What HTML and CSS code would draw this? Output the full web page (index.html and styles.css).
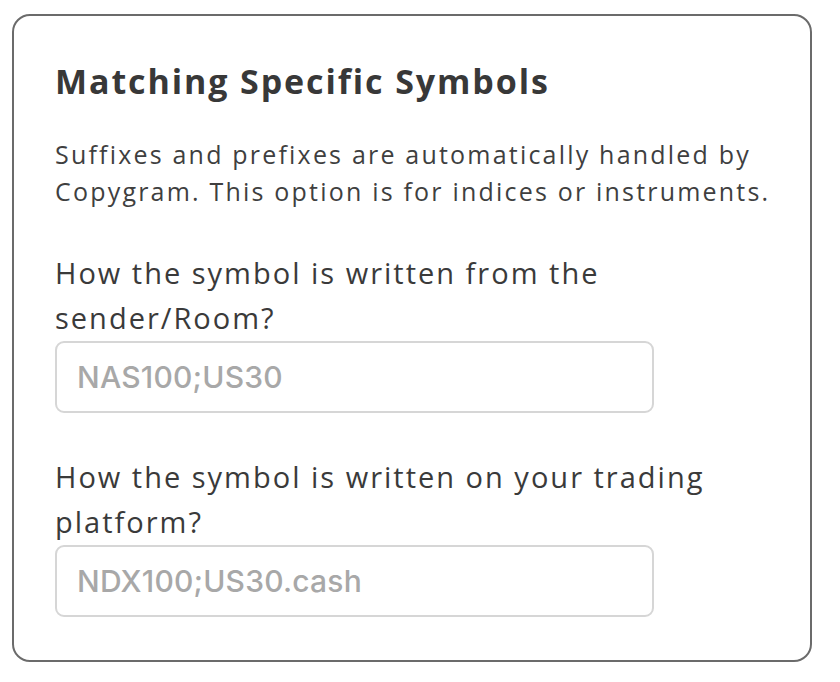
FILE: index.html
```html
<!DOCTYPE html>
<html lang="en">
<head>
<meta charset="utf-8">
<title>Matching Specific Symbols</title>
<link rel="stylesheet" href="styles.css">
</head>
<body>
<section class="card">
  <h2 class="title">Matching Specific Symbols</h2>
  <p class="desc">Suffixes and prefixes are automatically handled by Copygram. This option is for indices or instruments.</p>
  <div class="field">
    <label class="label" for="from">How the symbol is written from the sender/Room?</label>
    <input class="input" id="from" type="text" placeholder="NAS100;US30">
  </div>
  <div class="field">
    <label class="label" for="to">How the symbol is written on your trading platform?</label>
    <input class="input" id="to" type="text" placeholder="NDX100;US30.cash">
  </div>
</section>
</body>
</html>
```
FILE: styles.css
```css
html, body {
  margin: 0;
  padding: 0;
  background: #ffffff;
}
body {
  padding: 14px 0 0 12px;
  font-family: "Open Sans", "DejaVu Sans", sans-serif;
  color: #3a3a3a;
}
.card {
  box-sizing: border-box;
  width: 800px;
  height: 648px;
  border: 2px solid #6b6b6b;
  border-radius: 18px;
  padding: 37px 16px 0 41px;
  display: flex;
  flex-direction: column;
}
.title {
  margin: 0;
  font-size: 34px;
  line-height: 56px;
  font-weight: 700;
  letter-spacing: 1.9px;
  color: #383838;
}
.desc {
  margin: 27px 0 0 0;
  font-size: 25px;
  line-height: 37px;
  letter-spacing: 2.2px;
  color: #3f3f3f;
  max-width: 730px;
}
.field {
  display: flex;
  flex-direction: column;
  margin-top: 40px;
}
.field + .field {
  margin-top: 41px;
}
.label {
  font-size: 29px;
  line-height: 45px;
  letter-spacing: 2px;
  color: #3a3a3a;
}
.input {
  box-sizing: border-box;
  width: 599px;
  height: 72px;
  margin-top: 1px;
  border: 2px solid #d6d6d6;
  border-radius: 9px;
  padding: 0 20px;
  font-family: "Inter", "Roboto", sans-serif;
  font-size: 30px;
  font-weight: 500;
  letter-spacing: 0.2px;
  color: #333;
  background: #fff;
  outline: none;
}
.input::placeholder {
  color: #a8a8a8;
}
```
